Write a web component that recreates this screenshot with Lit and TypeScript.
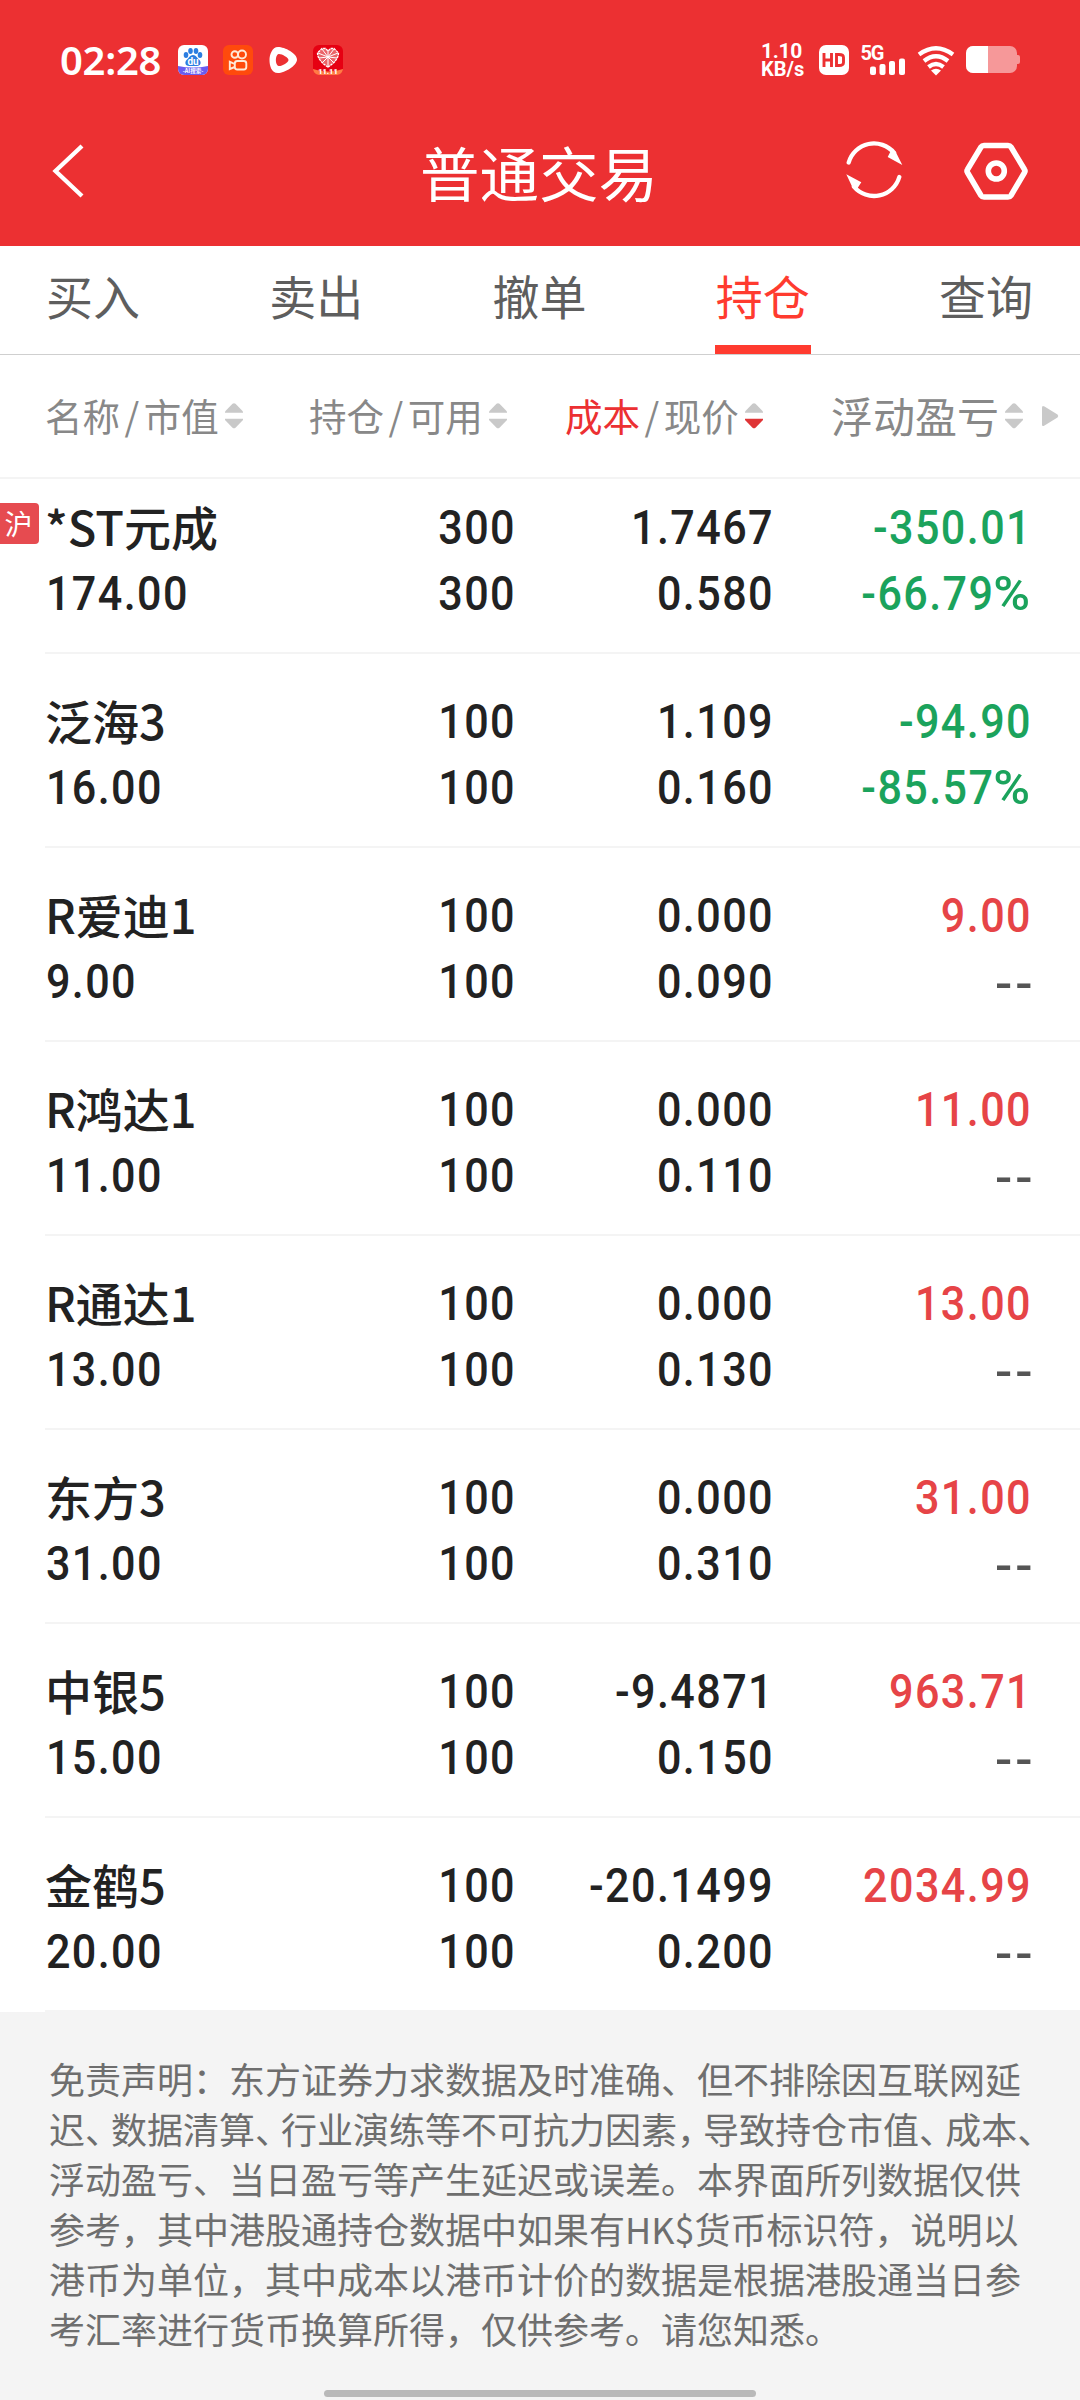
import { LitElement, html, css } from "lit";
import { customElement } from "lit/decorators.js";

interface Holding {
  name: string;
  value: string;
  held: string;
  usable: string;
  cost: string;
  price: string;
  profit: string;
  rate: string;
  tone: "up" | "down";
  badge?: string;
}

const row = (
  name: string, value: string, held: string, cost: string, price: string,
  profit: string, rate: string, tone: "up" | "down", badge?: string,
): Holding => ({ name, value, held, usable: held, cost, price, profit, rate, tone, badge });

const HOLDINGS: Holding[] = [
  row("*ST元成", "174.00", "300", "1.7467", "0.580", "-350.01", "-66.79%", "down", "沪"),
  row("泛海3", "16.00", "100", "1.109", "0.160", "-94.90", "-85.57%", "down"),
  row("R爱迪1", "9.00", "100", "0.000", "0.090", "9.00", "--", "up"),
  row("R鸿达1", "11.00", "100", "0.000", "0.110", "11.00", "--", "up"),
  row("R通达1", "13.00", "100", "0.000", "0.130", "13.00", "--", "up"),
  row("东方3", "31.00", "100", "0.000", "0.310", "31.00", "--", "up"),
  row("中银5", "15.00", "100", "-9.4871", "0.150", "963.71", "--", "up"),
  row("金鹤5", "20.00", "100", "-20.1499", "0.200", "2034.99", "--", "up"),
];

const TABS = ["买入", "卖出", "撤单", "持仓", "查询"];

@customElement("status-bar")
class StatusBar extends LitElement {
  static styles = css`
    :host { display: block; }
    .bar { display: flex; align-items: center; height: 120px; padding: 0 60px; box-sizing: border-box; color: #fff; }
    .time { width: 118px; padding-bottom: 1px; font: 600 40px/56px "Noto Sans", sans-serif; letter-spacing: -0.3px; white-space: nowrap; }
    svg { display: block; flex: none; }
    .apps { display: flex; align-items: center; gap: 15px; }
    .right { display: flex; align-items: center; margin-left: auto; }
    .speed { width: 58px; font: 700 20px/19px Roboto, sans-serif; }
    .speed div { white-space: nowrap; }
    .fast { font-size: 21px; line-height: 18px; letter-spacing: -0.3px; }
    .net { width: 57px; height: 40px; overflow: visible; }
    .fine { font-family: "Noto Sans CJK SC", sans-serif; }
    .latin { font-family: Roboto, sans-serif; }
  `;
  render() {
    return html`
      <div class="bar">
        <div class="time">02:28</div>
        <div class="apps">
          <svg width="30" height="30" viewBox="0 0 30 30">
            <defs><clipPath id="a"><rect width="30" height="30" rx="6" /></clipPath></defs>
            <g clip-path="url(#a)">
              <rect width="30" height="30" fill="#fff" />
              <path d="M0 21q15 3 30 0v9H0z" fill="#6a5cf0" />
              <g fill="#2b7de0">
                <ellipse cx="8" cy="10" rx="2.300" ry="3" /><ellipse cx="12.500" cy="6" rx="2.300" ry="3" />
                <ellipse cx="18" cy="6" rx="2.300" ry="3" /><ellipse cx="22" cy="10" rx="2.300" ry="3" />
                <path d="M15 10c3 0 4 3 6.500 5 2.500 3 .5 6-2.500 6h-8c-3 0-5-3-2.500-6 2.500-2 3.500-5 6.500-5z" />
              </g>
              <text class="latin" x="15" y="20" font-size="10" font-weight="700" fill="#fff" text-anchor="middle">du</text>
              <text class="fine" x="15" y="28" font-size="5.500" font-weight="700" fill="#fff" text-anchor="middle">-AI搜索-</text>
            </g>
          </svg>
          <svg width="30" height="30" viewBox="0 0 30 30" fill="none" stroke="#ffe9d8" stroke-width="1.900">
            <rect width="30" height="30" rx="6" fill="#ff4a0c" stroke="none" />
            <circle cx="11.800" cy="9.500" r="3.300" /><circle cx="19" cy="9.500" r="4" />
            <rect x="11.800" y="16" width="11.500" height="8.500" rx="2.500" />
            <path d="M11.800 19 6.800 16.800v7.200l5-2" />
          </svg>
          <svg width="30" height="30" viewBox="0 0 30 30">
            <path fill="#fff" fill-rule="evenodd" d="M10 2C17 2 29 8.500 29 14.500S17 28 10 28 1.500 20 1.500 15 4 2 10 2zM10.500 9c-3.500 1-3.500 11 0 12 3 .5 10-3.500 10-6S13.500 8.500 10.500 9z" />
          </svg>
          <svg width="30" height="30" viewBox="0 0 30 30">
            <rect width="30" height="30" rx="6" fill="#e60012" />
            <path d="M0 24q15 5 30 0a6 6 0 0 1-6 6H6a6 6 0 0 1-6-6z" fill="#ff7a45" />
            <path d="M15 22C10 19 4.500 14 4.500 8L9 3.500h3.500L15 6l2.500-2.500H21L25.500 8C25.500 14 20 19 15 22z" fill="#ea6468" stroke="#fff" stroke-width="1.300" stroke-dasharray="2.500 .7" />
            <path d="M5 8l10 4 10-4M6 13l9-1 9 1M15 6v15M9 4l6 8 6-8M9 18l6-6 6 6" fill="none" stroke="#fff" stroke-width="1" />
            <text class="latin" x="15" y="28.500" font-size="7.500" font-weight="900" fill="#fff" text-anchor="middle">11.11</text>
          </svg>
        </div>
        <div class="right">
          <div class="speed"><div class="fast">1.10</div><div>KB/s</div></div>
          <svg width="30" height="30" viewBox="0 0 30 30">
            <rect width="30" height="30" rx="7" fill="#fff" />
            <path d="M5 8v14M12.500 8v14M5 15h7.500M17.500 9.500V20.500H20q4.500 0 4.500-3V12.500q0-3-4.500-3z" fill="none" stroke="#ec3032" stroke-width="2.900" />
          </svg>
          <svg class="net" viewBox="0 0 57 40">
            <text class="latin" x="11.500" y="19.500" font-size="20" font-weight="700" fill="#fff" textLength="24">5G</text>
            <g fill="#fff">
              <rect x="21" y="26.500" width="6" height="8.500" rx="2" /><rect x="30.500" y="24" width="6" height="11" rx="2" />
              <rect x="40" y="21" width="6" height="14" rx="2" /><rect x="50" y="18.500" width="6" height="16.500" rx="2" />
            </g>
          </svg>
          <svg width="60" height="40" viewBox="0 0 60 40">
            <g fill="none" stroke="#fff" stroke-width="4.300">
              <path d="M13 14.500q17-12.500 34 0" /><path d="M18 21q12-9.500 24 0" /><path d="M22.500 27q7.500-6 15 0" />
            </g>
            <path d="M30 35.500 25 30.500q5-3.500 10 0z" fill="#fff" />
          </svg>
          <svg width="54" height="28" viewBox="0 0 54 28">
            <defs><clipPath id="b"><rect width="51" height="27" rx="7" /></clipPath></defs>
            <g clip-path="url(#b)"><rect width="51" height="27" fill="#f69899" /><rect width="22" height="27" fill="#fff" /></g>
            <path d="M51 9h1q2 0 2 2v5q0 2-2 2h-1z" fill="#f69899" />
          </svg>
        </div>
      </div>
    `;
  }
}

@customElement("sort-arrows")
class SortArrows extends LitElement {
  static properties = { active: { type: Boolean } };
  declare active: boolean;
  static styles = css`
    :host { display: block; flex: none; }
    svg { display: block; }
    path { fill: #c9c9c9; }
    .on { fill: #df3436; }
  `;
  render() {
    return html`<svg width="18" height="26" viewBox="0 0 18 26">
      <path d="M0 9.700V8.500L7.500.8q1.500-1.200 3 0L18 8.500v1.200z" />
      <path class=${this.active ? "on" : ""} d="M0 15.800V17l7.500 7.700q1.500 1.200 3 0L18 17v-1.200z" />
    </svg>`;
  }
}

@customElement("app-root")
class AppRoot extends LitElement {
  static styles = css`
    :host { display: block; width: 1080px; height: 2400px; overflow: hidden; background: #f4f4f4;
      font-family: "Noto Sans CJK SC", sans-serif; }
    .top { height: 246px; background: #ec3032; }
    .nav { display: grid; grid-template-columns: 1fr auto 1fr; align-items: center; height: 102px; padding: 0 52px 0 50px; color: #fff; }
    .title { font-size: 59.500px; line-height: 102px; }
    .actions { display: flex; justify-content: flex-end; align-items: center; gap: 60px; }
    svg { display: block; flex: none; }
    .tabs { display: flex; justify-content: space-between; height: 108px; padding: 0 46px 0 45px; background: #fff; border-bottom: 1px solid #cfcfcf; }
    .tab { width: 96px; height: 108px; box-sizing: border-box; font-size: 47px; line-height: 98px; text-align: center; white-space: nowrap; color: #5e5e5e; }
    .tab.on { color: #ff3b2f; border-bottom: 9px solid #ff3b2f; }
    .heads { display: grid; grid-template-columns: 264px 256px 266px 211px 1fr; align-items: center; height: 122px;
      padding-left: 45px; background: #fff; border-bottom: 2px solid #f4f4f4; color: #888; }
    .head { display: flex; align-items: center; font-size: 37.500px; gap: 6px; white-space: nowrap; }
    .head > span { line-height: 56px; padding-bottom: 2px; }
    .head.big { font-size: 42px; }
    .slash { margin: 0 4.500px; }
    .hot { color: #ec3032; }
    .list { background: #fff; }
    .item { display: flex; height: 194px; }
    .item:first-child { height: 175px; }
    .edge { width: 45px; flex: none; padding-top: 43px; box-sizing: border-box; }
    .item:first-child .edge { padding-top: 24px; }
    .item:first-child .cells { padding-top: 16px; }
    .badge { width: 39px; height: 41px; border-radius: 0 4px 4px 0; background: #e64b50; color: #fff; font-size: 28px; line-height: 40px; text-align: center; text-indent: -2px; }
    .cells { flex: 1; display: grid; grid-template-columns: 202px 269px 258px 258px; grid-template-rows: 66px 66px;
      box-sizing: border-box; padding-top: 35px; border-bottom: 2px solid #f4f4f4; color: #222; }
    .name { font-size: 47px; line-height: 62px; font-weight: 500; white-space: nowrap; }
    .num { font: 500 49px/66px Roboto, sans-serif; letter-spacing: 1.600px; white-space: nowrap; text-align: right;
      transform: scaleX(0.88); transform-origin: right center; }
    .num.left { text-align: left; transform-origin: left center; padding-left: 1px; }
    .pct { display: inline-block; margin-left: 5px; transform: scaleX(1.16); transform-origin: right center; }
    .down { color: #1ba35c; }
    .up { color: #e64447; }
    .none { color: #555; }
    .dash { display: inline-block; width: 22.500px; transform: scaleX(1.18) translateY(2px); transform-origin: right center; letter-spacing: 0; }
    .note { padding: 41px 0 0 49px; color: #6e6e6e; font-size: 36px; line-height: 50px; white-space: nowrap; }
    .tight { letter-spacing: -10px; }
    .home { width: 432px; height: 7px; margin: 37px auto 0; border-radius: 4px; background: #b9b9b9; }
  `;

  private head(a: string, b: string, hot = false) {
    return html`<div class="head"><span><span class=${hot ? "hot" : ""}>${a}</span><span class="slash">/</span>${b}</span>
      <sort-arrows ?active=${hot}></sort-arrows></div>`;
  }

  private rate(h: Holding) {
    if (h.rate === "--") {
      return html`<div class="num none"><span class="dash">-</span><span class="dash">-</span></div>`;
    }
    return html`<div class="num ${h.tone}">${h.rate.slice(0, -1)}<span class="pct">%</span></div>`;
  }

  private item(h: Holding) {
    return html`<div class="item">
      <div class="edge">${h.badge ? html`<div class="badge">${h.badge}</div>` : ""}</div>
      <div class="cells">
        <div class="name">${h.name}</div>
        <div class="num">${h.held}</div>
        <div class="num">${h.cost}</div>
        <div class="num ${h.tone}">${h.profit}</div>
        <div class="num left">${h.value}</div>
        <div class="num">${h.usable}</div>
        <div class="num">${h.price}</div>
        ${this.rate(h)}
      </div>
    </div>`;
  }

  render() {
    const t = html`<span class="tight">、</span>`;
    return html`
      <div class="top">
        <status-bar></status-bar>
        <div class="nav">
          <svg width="36" height="56" viewBox="0 0 36 56" fill="none" stroke="#fff" stroke-width="4.300">
            <path d="M32 3 5.500 28 32 53" />
          </svg>
          <div class="title">普通交易</div>
          <div class="actions">
            <svg width="60" height="60" viewBox="0 0 60 60" fill="none" stroke="#fff" stroke-width="4.300" stroke-linecap="round">
              <path d="M4.700 21.500A26.300 26.300 0 0 1 50.100 11.800M55.300 36A26.300 26.300 0 0 1 9.900 45.600" />
              <path d="M58.300 24 43.700 16 47 9.500 51.500 10.500zM2.300 33.300 17.300 41.300 13 48 8.500 46.500z" fill="#fff" stroke="none" />
            </svg>
            <svg width="64" height="60" viewBox="0 0 64 60" fill="none" stroke="#fff" stroke-width="5.600">
              <path d="M20 4.500h24q2 0 3 1.500L60.500 28.500q1 1.500 0 3L47 54.500Q46 56 44 56H20q-2 0-3-1.500L3.500 31.500q-1-1.500 0-3L17 6Q18 4.500 20 4.500z" />
              <circle cx="32.300" cy="30" r="8" />
            </svg>
          </div>
        </div>
      </div>
      <div class="tabs">${TABS.map((x) => html`<div class="tab ${x === "持仓" ? "on" : ""}">${x}</div>`)}</div>
      <div class="heads">
        ${this.head("名称", "市值")}${this.head("持仓", "可用")}${this.head("成本", "现价", true)}
        <div class="head big"><span>浮动盈亏</span><sort-arrows></sort-arrows></div>
        <svg width="17" height="22" viewBox="0 0 17 22"><path d="M0 2.500Q0 0 2.500 1.500L15.500 9.500Q17 11 15.500 12.500L2.500 20.500Q0 22 0 19.500z" fill="#c9c9c9" /></svg>
      </div>
      <div class="list">${HOLDINGS.map((h) => this.item(h))}</div>
      <div class="note">
        <div>免责声明：东方证券力求数据及时准确、但不排除因互联网延</div>
        <div>迟${t}数据清算${t}行业演练等不可抗力因素<span class="tight">，</span>导致持仓市值${t}成本${t}</div>
        <div>浮动盈亏、当日盈亏等产生延迟或误差。本界面所列数据仅供</div>
        <div>参考，其中港股通持仓数据中如果有HK$货币标识符，说明以</div>
        <div>港币为单位，其中成本以港币计价的数据是根据港股通当日参</div>
        <div>考汇率进行货币换算所得，仅供参考。请您知悉。</div>
      </div>
      <div class="home"></div>
    `;
  }
}
